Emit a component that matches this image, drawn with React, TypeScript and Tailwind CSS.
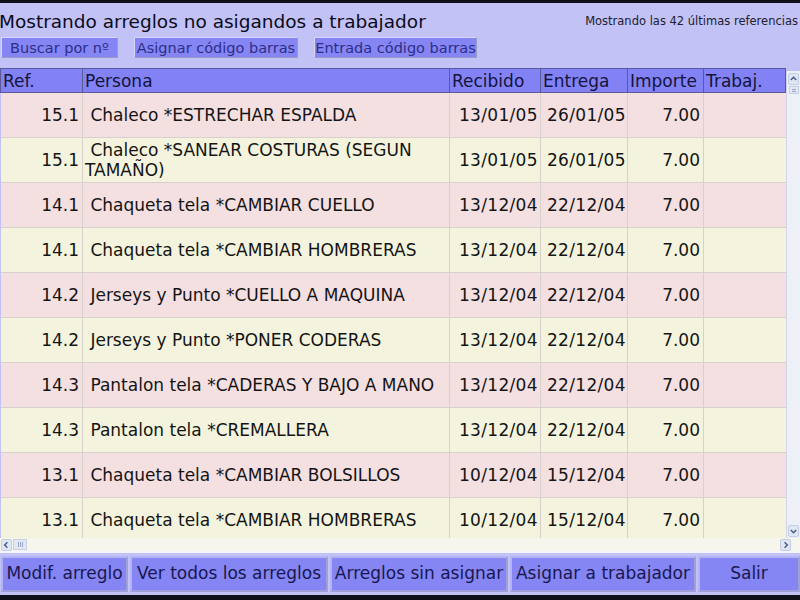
import React from "react";

type Row = {
  ref: string;
  persona: string;
  recibido: string;
  entrega: string;
  importe: string;
};

const rows: Row[] = [
  { ref: "15.1", persona: "Chaleco *ESTRECHAR ESPALDA", recibido: "13/01/05", entrega: "26/01/05", importe: "7.00" },
  { ref: "15.1", persona: "Chaleco *SANEAR COSTURAS (SEGUN TAMAÑO)", recibido: "13/01/05", entrega: "26/01/05", importe: "7.00" },
  { ref: "14.1", persona: "Chaqueta tela *CAMBIAR CUELLO", recibido: "13/12/04", entrega: "22/12/04", importe: "7.00" },
  { ref: "14.1", persona: "Chaqueta tela *CAMBIAR HOMBRERAS", recibido: "13/12/04", entrega: "22/12/04", importe: "7.00" },
  { ref: "14.2", persona: "Jerseys y Punto *CUELLO A MAQUINA", recibido: "13/12/04", entrega: "22/12/04", importe: "7.00" },
  { ref: "14.2", persona: "Jerseys y Punto *PONER CODERAS", recibido: "13/12/04", entrega: "22/12/04", importe: "7.00" },
  { ref: "14.3", persona: "Pantalon tela *CADERAS Y BAJO A MANO", recibido: "13/12/04", entrega: "22/12/04", importe: "7.00" },
  { ref: "14.3", persona: "Pantalon tela *CREMALLERA", recibido: "13/12/04", entrega: "22/12/04", importe: "7.00" },
  { ref: "13.1", persona: "Chaqueta tela *CAMBIAR BOLSILLOS", recibido: "10/12/04", entrega: "15/12/04", importe: "7.00" },
  { ref: "13.1", persona: "Chaqueta tela *CAMBIAR HOMBRERAS", recibido: "10/12/04", entrega: "15/12/04", importe: "7.00" },
];

const topButtons = [
  { label: "Buscar por nº", w: "w-[117px]" },
  { label: "Asignar código barras", w: "w-[164px]" },
  { label: "Entrada código barras", w: "w-[163px]" },
];

const bottomButtons = [
  { label: "Modif. arreglo", w: "w-[127px]" },
  { label: "Ver todos los arreglos", w: "w-[198px]" },
  { label: "Arreglos sin asignar", w: "w-[178px]" },
  { label: "Asignar a trabajador", w: "w-[186px]" },
  { label: "Salir", w: "flex-1" },
];

function ScrollArrow({ dir }: { dir: "up" | "down" | "left" | "right" }) {
  const d = {
    up: "M2 6 L5 3 L8 6",
    down: "M2 4 L5 7 L8 4",
    left: "M6 2 L3 5 L6 8",
    right: "M4 2 L7 5 L4 8",
  }[dir];
  return (
    <div className="w-[11px] h-[12px] flex items-center justify-center bg-[#dfe6f4] border border-[#c4cde4] rounded-[2px]">
      <svg width="10" height="10" viewBox="0 0 10 10">
        <path d={d} fill="none" stroke="#4a5a8c" strokeWidth="1.6" />
      </svg>
    </div>
  );
}

export default function App() {
  return (
    <div
      className="w-[800px] h-[600px] flex flex-col bg-[#c2c2f6] border-t-[3px] border-b-[5px] border-[#101018] overflow-hidden"
      style={{ fontFamily: '"DejaVu Sans", Verdana, sans-serif' }}
    >
      {/* Title + counter */}
      <div className="h-[33px] flex items-end justify-between pr-[2px]">
        <h1 className="text-[18.5px] leading-[26px] text-[#0c0c20] -ml-[1px]">
          Mostrando arreglos no asigandos a trabajador
        </h1>
        <span className="text-[11.5px] text-[#202030] self-start mt-[10px]">
          Mostrando las 42 últimas referencias
        </span>
      </div>

      {/* Top action buttons */}
      <div className="h-[22px] mt-[2px] flex gap-[16px] pl-[1px]">
        {topButtons.map((b) => (
          <button
            key={b.label}
            className={`${b.w} h-[21px] bg-[#8585f4] border border-t-[#d6d6fb] border-l-[#d6d6fb] border-r-[#9a9ac8] border-b-[#9a9ac8] text-[14.5px] leading-[18px] text-[#2e2e88]`}
          >
            {b.label}
          </button>
        ))}
      </div>

      {/* Table with scrollbars */}
      <div className="mt-[10px] h-[470px] flex">
        <div className="w-[786px] overflow-hidden">
          <table className="table-fixed border-collapse w-[785px] text-[17px] text-[#141414]">
            <colgroup>
              <col className="w-[82px]" />
              <col className="w-[367px]" />
              <col className="w-[91px]" />
              <col className="w-[87px]" />
              <col className="w-[76px]" />
              <col className="w-[82px]" />
            </colgroup>
            <thead>
              <tr className="h-[24px] bg-[#8282f5] text-[#14143c]">
                {["Ref.", "Persona", "Recibido", "Entrega", "Importe", "Trabaj."].map((h) => (
                  <th
                    key={h}
                    className="font-normal text-left text-[17px] pl-[2px] border border-[#5a5a98] leading-[20px] whitespace-nowrap overflow-hidden"
                  >
                    {h}
                  </th>
                ))}
              </tr>
            </thead>
            <tbody>
              {rows.map((r, i) => (
                <tr
                  key={i}
                  className={`h-[45px] ${i % 2 === 0 ? "bg-[#f4dfe1]" : "bg-[#f4f4de]"}`}
                >
                  <td className="text-right pr-[3px] border-r border-b border-[#d8d0cc]">{r.ref}</td>
                  <td className="pl-[2px] pr-[2px] leading-[20px] border-r border-b border-[#d8d0cc] whitespace-pre-wrap">
                    {" " + r.persona}
                  </td>
                  <td className="pl-[9px] tracking-[0.3px] border-r border-b border-[#d8d0cc]">{r.recibido}</td>
                  <td className="pl-[6px] tracking-[0.3px] border-r border-b border-[#d8d0cc]">{r.entrega}</td>
                  <td className="text-right pr-[3px] border-r border-b border-[#d8d0cc]">{r.importe}</td>
                  <td className="border-b border-[#d8d0cc]"></td>
                </tr>
              ))}
            </tbody>
          </table>
        </div>

        {/* Vertical scrollbar */}
        <div className="w-[14px] mt-[3px] flex flex-col items-center bg-[#eef0f8] border-l border-[#d0d4e6] pt-[2px] pb-[1px]">
          <ScrollArrow dir="up" />
          <div className="w-[10px] h-[8px] mt-[1px] bg-[#e2e7f4] border border-[#c8d0e6] flex flex-col justify-center gap-[1px] px-[2px]">
            <div className="h-px bg-[#9aa6c8]" />
            <div className="h-px bg-[#9aa6c8]" />
          </div>
          <div className="flex-1" />
          <ScrollArrow dir="down" />
        </div>
      </div>

      {/* Horizontal scrollbar */}
      <div className="h-[13px] flex items-center bg-[#f6f6ec] pl-[1px] pr-[9px]">
        <ScrollArrow dir="left" />
        <div className="w-[14px] h-[11px] ml-[1px] bg-[#e2e7f4] border border-[#c8d0e6] flex justify-center items-center gap-[1px]">
          <div className="w-px h-[5px] bg-[#9aa6c8]" />
          <div className="w-px h-[5px] bg-[#9aa6c8]" />
          <div className="w-px h-[5px] bg-[#9aa6c8]" />
        </div>
        <div className="flex-1" />
        <ScrollArrow dir="right" />
      </div>

      {/* Bottom action bar */}
      <div className="flex-1 border-t-2 border-[#f4f4fc] flex gap-[2px] pt-[3px] pb-[3px] pl-[1px]">
        {bottomButtons.map((b) => (
          <button
            key={b.label}
            className={`${b.w} h-[36px] bg-[#8585f4] border-2 border-t-[#b4b4f4] border-l-[#b4b4f4] border-r-[#a0a0d8] border-b-[#a0a0d8] text-[17px] text-[#181850] whitespace-nowrap`}
          >
            {b.label}
          </button>
        ))}
      </div>
    </div>
  );
}
